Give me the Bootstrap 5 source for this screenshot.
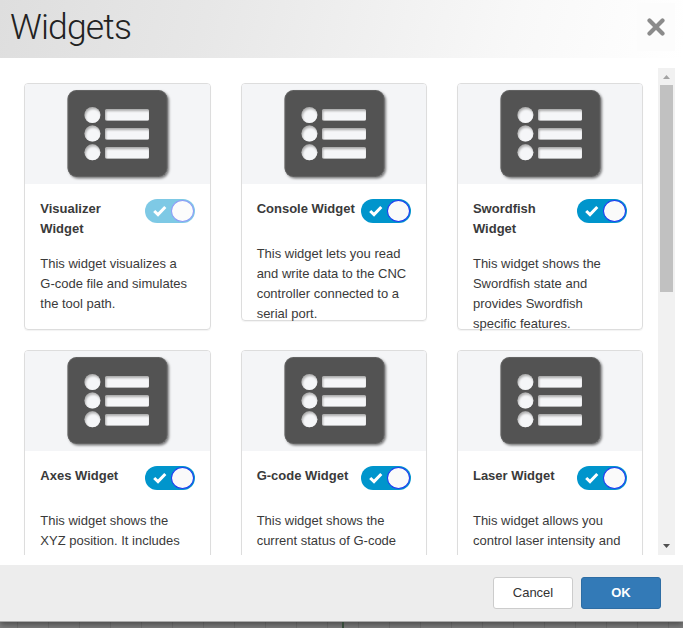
<!DOCTYPE html>
<html lang="en">
<head>
<meta charset="utf-8">
<title>Widgets</title>
<link href="https://cdn.jsdelivr.net/npm/bootstrap@5.3.0/dist/css/bootstrap.min.css" rel="stylesheet">
<style>
body{font:13px/20px "Liberation Sans",Arial,sans-serif;color:#3a3a3a;height:628px;overflow:hidden;background:repeating-linear-gradient(90deg,transparent 0 17px,#747474 17px 18px,transparent 18px 31px) 0 0,#808080}
.dialog{height:622px;background:#fff;border-bottom:1px solid #aaa;box-shadow:0 3px 6px rgba(0,0,0,.4)}
.dialog-head{height:58px;background:linear-gradient(105deg,#dedede 0%,#e7e7e7 30%,#f8f8f8 75%,#fff 100%);padding-left:10px;padding-right:8px}
.dialog-head h1{font:300 35.5px/55px Roboto,sans-serif;color:#222;letter-spacing:-.85px}
.close-box{width:38px;height:48px;margin-top:3px;background:#fcfcfc}
.dialog-main{height:507px;padding:10px 8px 10px 0}
.widget-view{padding:15px 15px 0 24.3px}
.widget-grid{display:grid;grid-template-columns:repeat(3,186.33px);column-gap:30px;row-gap:20px}
.widget-tile{border:1px solid #ddd;border-radius:4px;box-shadow:0 1px 1px rgba(0,0,0,.05);height:247px}
.short{height:238px}
.thumb{height:100px;background:#f4f5f7;border-radius:3px 3px 0 0;flex:none;padding:5px 0 0 4px}
.tile-text{padding:15px 15px 0}
.tile-text b{width:104px}
.tile-text p{width:154px;margin-top:15px;line-height:20px}
.head-row{min-height:30px}
.toggle{width:50px;height:24px;border-radius:12px;background:#0095cc;padding:1px 1px 1px 8px;flex:none}
.knob{width:23px;height:22px;border-radius:50%;border:1px solid #1b3cf0;background:#fafafa}
.locked{opacity:.5}
.scroller{width:17px;background:#f1f1f1}
.scroller i{height:207px;width:13px;background:#c1c1c1}
.dialog-foot{height:56px;background:#ededed;padding:12px 22px 0 0;gap:8px}
.dialog-foot .btn{width:80px;height:32px;font-size:13px;line-height:20px;padding:5px 0;border-radius:3px}
.btn-plain{background:#fff;border-color:#ccc;color:#333}
.btn-ok{background:#337ab7;border-color:#2e6da4;color:#fff;font-weight:bold}
.axis{position:absolute;left:342px;top:622px;width:2px;height:6px;background:#354a39;z-index:1}
</style>
<script src="https://cdn.jsdelivr.net/npm/bootstrap@5.3.0/dist/js/bootstrap.bundle.min.js"></script>
</head>
<body>
<svg width="0" height="0" class="position-absolute">
<defs>
<filter id="soft" x="-10%" y="-10%" width="125%" height="125%"><feDropShadow dx="1.5" dy="1.5" stdDeviation="1" flood-color="#000" flood-opacity=".5"/></filter>
<filter id="inset" x="-20%" y="-20%" width="140%" height="140%"><feOffset dx="1" dy="1.5"/><feGaussianBlur stdDeviation="1"/><feComposite in2="SourceAlpha" operator="in"/></filter>
<symbol id="list" viewBox="0 0 106 94">
<rect x="1.5" y="1" width="100" height="87" rx="9" fill="#535353" filter="url(#soft)"/>
<rect x="2" y="1.5" width="99" height="86" rx="8.5" fill="none" stroke="#777" stroke-opacity=".45"/>
<g fill="#aaa"><circle cx="26.4" cy="26" r="8"/><circle cx="26.4" cy="44.5" r="8"/><circle cx="26.4" cy="63.300" r="8"/><rect x="39" y="20" width="44" height="11.500" rx="1.500"/><rect x="39" y="39" width="44" height="11.500" rx="1.500"/><rect x="39" y="58" width="44" height="11.500" rx="1.500"/></g>
<g fill="#f5f6f8" filter="url(#inset)"><circle cx="26.4" cy="26" r="8"/><circle cx="26.4" cy="44.5" r="8"/><circle cx="26.4" cy="63.300" r="8"/><rect x="39" y="20" width="44" height="11.500" rx="1.500"/><rect x="39" y="39" width="44" height="11.500" rx="1.500"/><rect x="39" y="58" width="44" height="11.500" rx="1.500"/></g>
</symbol>
<symbol id="tick" viewBox="0 0 14 12"><path d="M1.200 6 5 9.600 12.300 2" fill="none" stroke="#fff" stroke-width="3"/></symbol>
</defs></svg>
<div class="axis"></div>
<main class="dialog position-relative">
<header class="dialog-head d-flex justify-content-between">
<h1 class="m-0">Widgets</h1>
<div class="close-box d-flex align-items-center justify-content-center"><svg width="18" height="18" viewBox="0 0 18 18"><path d="M2.500 2.500 15.500 15.500M15.500 2.500 2.500 15.500" stroke="#8b8b8b" stroke-width="4.200" stroke-linecap="round"/></svg></div>
</header>
<section class="dialog-main d-flex">
<div class="widget-view flex-fill overflow-hidden">
<div class="widget-grid">
<article class="widget-tile d-flex flex-column"><div class="thumb d-flex justify-content-center"><svg width="106" height="94"><use href="#list"/></svg></div><div class="tile-text"><div class="d-flex justify-content-between head-row"><b>Visualizer Widget</b><span class="toggle locked d-flex align-items-center justify-content-between"><svg width="14" height="12"><use href="#tick"/></svg><span class="knob"></span></span></div><p class="mb-0">This widget visualizes a G-code file and simulates the tool path.</p></div></article>
<article class="widget-tile short d-flex flex-column"><div class="thumb d-flex justify-content-center"><svg width="106" height="94"><use href="#list"/></svg></div><div class="tile-text"><div class="d-flex justify-content-between head-row"><b>Console Widget</b><span class="toggle d-flex align-items-center justify-content-between"><svg width="14" height="12"><use href="#tick"/></svg><span class="knob"></span></span></div><p class="mb-0">This widget lets you read and write data to the CNC controller connected to a serial port.</p></div></article>
<article class="widget-tile d-flex flex-column"><div class="thumb d-flex justify-content-center"><svg width="106" height="94"><use href="#list"/></svg></div><div class="tile-text"><div class="d-flex justify-content-between head-row"><b>Swordfish Widget</b><span class="toggle d-flex align-items-center justify-content-between"><svg width="14" height="12"><use href="#tick"/></svg><span class="knob"></span></span></div><p class="mb-0">This widget shows the Swordfish state and provides Swordfish specific features.</p></div></article>
<article class="widget-tile d-flex flex-column"><div class="thumb d-flex justify-content-center"><svg width="106" height="94"><use href="#list"/></svg></div><div class="tile-text"><div class="d-flex justify-content-between head-row"><b>Axes Widget</b><span class="toggle d-flex align-items-center justify-content-between"><svg width="14" height="12"><use href="#tick"/></svg><span class="knob"></span></span></div><p class="mb-0">This widget shows the XYZ position. It includes</p></div></article>
<article class="widget-tile d-flex flex-column"><div class="thumb d-flex justify-content-center"><svg width="106" height="94"><use href="#list"/></svg></div><div class="tile-text"><div class="d-flex justify-content-between head-row"><b>G-code Widget</b><span class="toggle d-flex align-items-center justify-content-between"><svg width="14" height="12"><use href="#tick"/></svg><span class="knob"></span></span></div><p class="mb-0">This widget shows the current status of G-code</p></div></article>
<article class="widget-tile d-flex flex-column"><div class="thumb d-flex justify-content-center"><svg width="106" height="94"><use href="#list"/></svg></div><div class="tile-text"><div class="d-flex justify-content-between head-row"><b>Laser Widget</b><span class="toggle d-flex align-items-center justify-content-between"><svg width="14" height="12"><use href="#tick"/></svg><span class="knob"></span></span></div><p class="mb-0">This widget allows you control laser intensity and</p></div></article>
</div></div>
<div class="scroller d-flex flex-column align-items-center flex-shrink-0"><svg width="17" height="17"><path d="M5 11h7L8.500 7z" fill="#a3a3a3"/></svg><i></i><svg class="mt-auto" width="17" height="17"><path d="M5 6h7L8.500 10z" fill="#505050"/></svg></div>
</section>
<footer class="dialog-foot d-flex justify-content-end"><button class="btn btn-plain">Cancel</button><button class="btn btn-ok">OK</button></footer>
</main>
</body>
</html>
